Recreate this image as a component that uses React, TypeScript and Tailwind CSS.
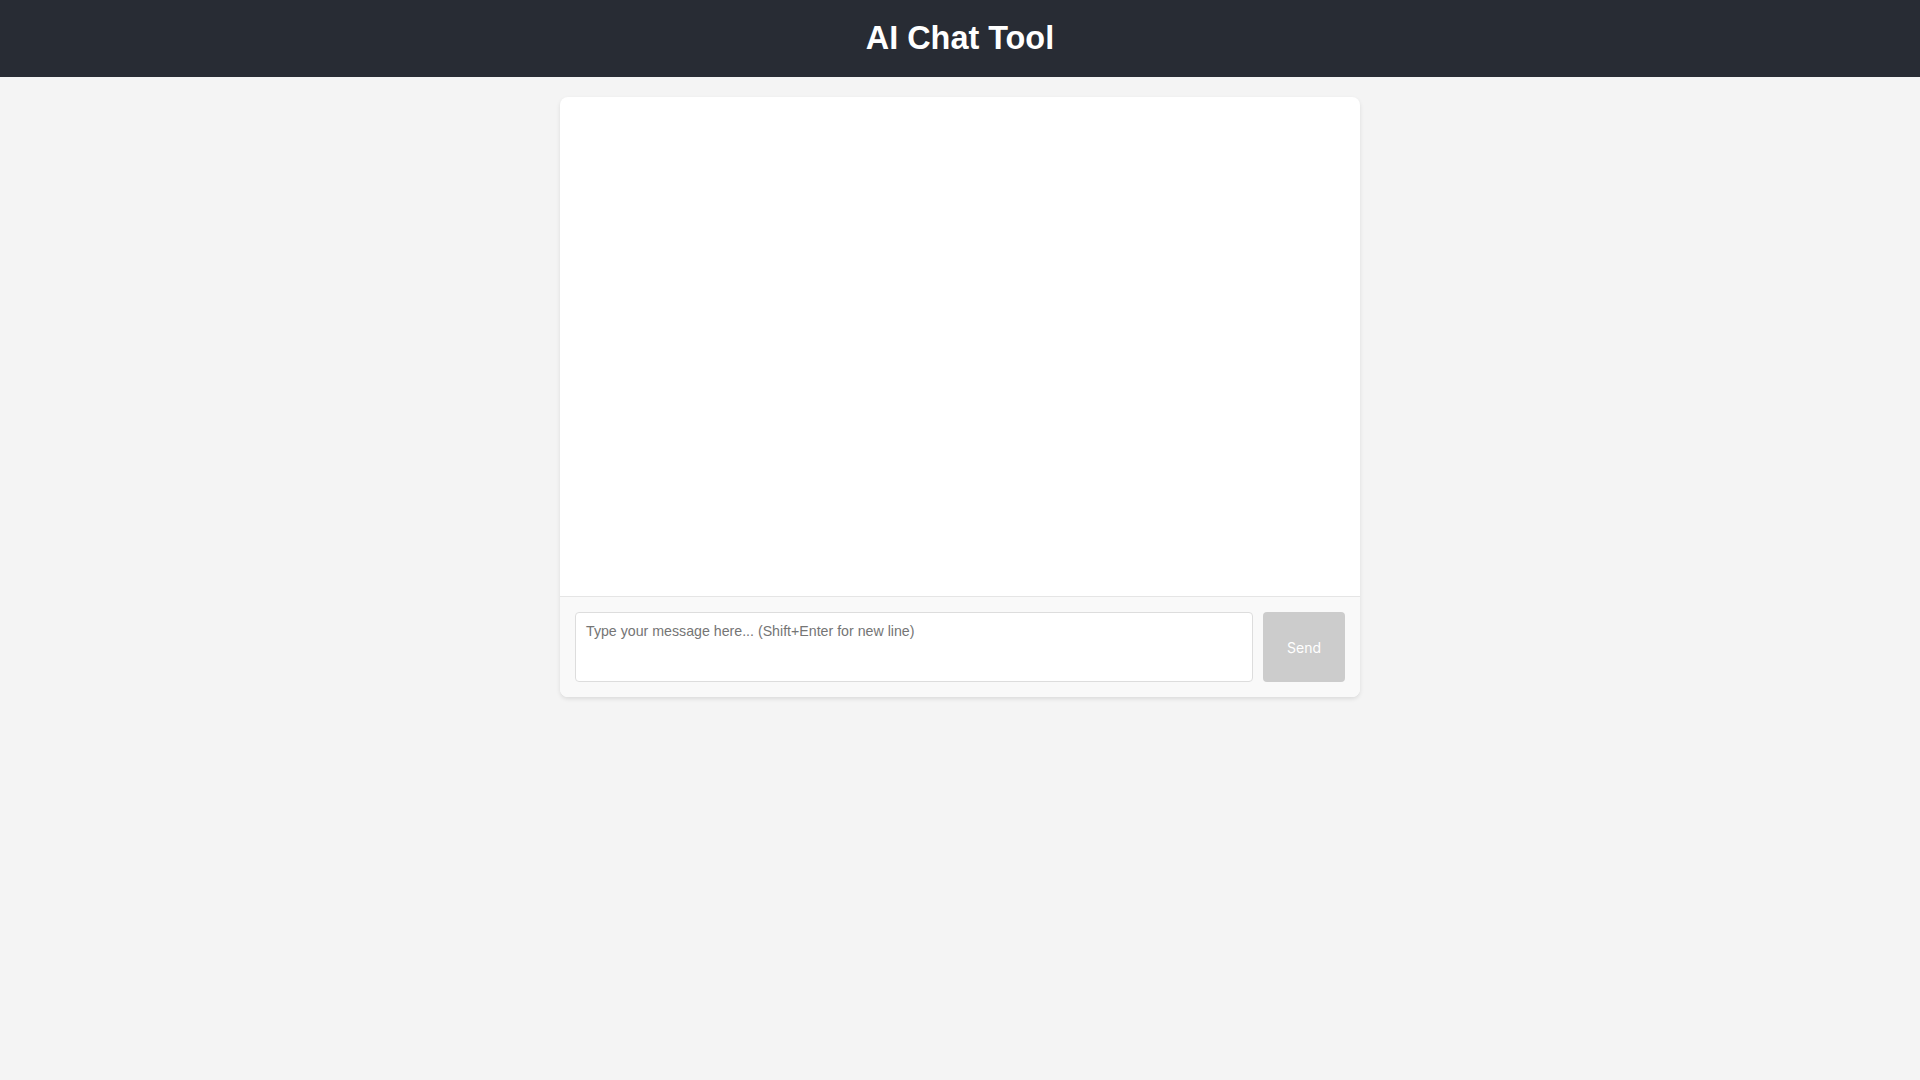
export default function App() {
  return (
    <div className="min-h-screen bg-[#f4f4f4] font-['Liberation_Sans',Arial,sans-serif]">
      <header className="bg-[#282c34] py-5 text-center">
        <h1 className="text-[32.4px] leading-[37px] font-bold text-white">AI Chat Tool</h1>
      </header>

      <main className="mx-auto mt-5 w-[800px] overflow-hidden rounded-lg bg-white shadow-[0_2px_4px_rgba(0,0,0,0.1)]">
        <div className="h-[499px] overflow-y-auto p-5"></div>
        <div className="flex gap-[10px] border-t border-[#e5e5e5] bg-[#f9f9f9] p-[15px]">
          <textarea
            className="h-[70px] flex-1 resize-none rounded border border-[#dddddd] bg-white px-[10px] pt-[8px] pb-[9px] text-[14.2px] text-[#333] placeholder:text-[#757575] outline-none font-['Liberation_Sans',Arial,sans-serif]"
            placeholder="Type your message here... (Shift+Enter for new line)"
          />
          <button
            disabled
            className="h-[70px] w-[82px] rounded bg-[#cccccc] pt-[2px] text-sm text-white font-['Inter',sans-serif]"
          >
            Send
          </button>
        </div>
      </main>
    </div>
  );
}
